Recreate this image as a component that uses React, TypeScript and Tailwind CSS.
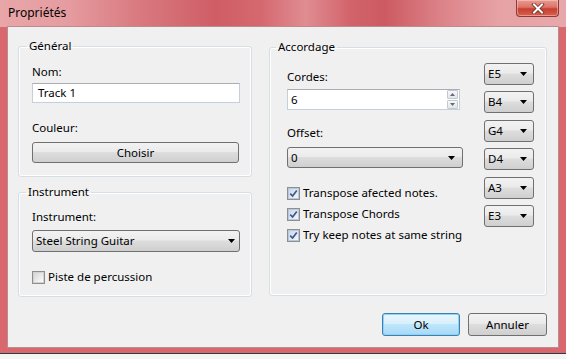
import React from "react";

function Arrow() {
  return (
    <svg width="7" height="4" viewBox="0 0 7 4" className="shrink-0">
      <path d="M0 0 H7 L3.5 4 Z" fill="#000" />
    </svg>
  );
}

function Check({ checked }: { checked: boolean }) {
  return (
    <span className="w-[13px] h-[13px] border border-[#8e8f8f] bg-white flex items-center justify-center shrink-0">
      <span
        className={
          checked
            ? "w-[11px] h-[11px] border border-[#b8c7db] bg-[linear-gradient(135deg,#cad7e9,#f4f7fb)] flex items-center justify-center"
            : "w-[11px] h-[11px] border border-[#d2d2d2] bg-[linear-gradient(135deg,#d6d6d6,#fbfbfb)] flex items-center justify-center"
        }
      >
        {checked && (
          <svg width="9" height="9" viewBox="0 0 9 9">
            <path d="M1.2 4.6 L3.6 7 L7.8 1.6" stroke="#3f568a" strokeWidth="1.7" fill="none" />
          </svg>
        )}
      </span>
    </span>
  );
}

function NoteCombo({ text }: { text: string }) {
  return (
    <div className="h-[22px] flex items-center justify-between border border-[#707070] rounded-[3px] bg-[linear-gradient(to_bottom,#f2f2f2_0%,#ebebeb_45%,#dddddd_50%,#cfcfcf_100%)] pl-[3px] pr-[6px]">
      <span className="leading-[16px]">{text}</span>
      <Arrow />
    </div>
  );
}

export default function App() {
  return (
    <div className="w-[566px] h-[359px] bg-[#d9686e] flex flex-col text-[11.5px] text-black font-['Noto_Sans',sans-serif] overflow-hidden">
      {/* title bar */}
      <div className="h-[27px] flex items-start justify-between bg-[linear-gradient(90deg,#e8a6a9_0%,#e59ca0_12%,#d97b81_24%,#cf5d66_38%,#d5686f_46%,#df8d92_54%,#d2636a_62%,#cd5a62_68%,#dc8389_78%,#e6a2a5_88%,#e8a8ab_100%)]">
        <span className="ml-[8px] mt-[5px] leading-[16px] text-[12px]">Propriétés</span>
        <div className="mr-[7px] w-[43px] h-[17px] rounded-b-[4px] border border-t-0 border-[#8a3b36] bg-[linear-gradient(to_bottom,#e89a90_0%,#dc7467_45%,#c83f30_55%,#d9604f_100%)] flex items-center justify-center shadow-[inset_0_0_0_1px_rgba(255,220,215,0.45)]">
          <svg width="14" height="11" viewBox="0 0 14 11">
            <path d="M3 1.5 L11 9.5 M11 1.5 L3 9.5" stroke="#6b2b27" strokeWidth="3.6" strokeLinecap="square" />
            <path d="M3 1.5 L11 9.5 M11 1.5 L3 9.5" stroke="#ffffff" strokeWidth="2" strokeLinecap="square" />
          </svg>
        </div>
      </div>

      {/* client area */}
      <div className="mx-[8px] h-[320px] bg-[#f0f0f0] flex flex-col pt-[11px] pl-[10px] pr-[11px] shadow-[0_0_0_1px_#b98c8f]">
        <div className="flex gap-[17px] items-start">
          {/* left column */}
          <div className="w-[234px] flex flex-col">
            <fieldset className="h-[139px] border border-[#d5dfe5] rounded-[3px] px-0 pb-0 m-0 shadow-[inset_0_0_0_1px_#ffffff]">
              <legend className="ml-[8px] px-[2px] leading-[16px]">Général</legend>
              <div className="pl-[13px] flex flex-col">
                <span className="mt-[10px] leading-[16px]">Nom:</span>
                <div className="mt-[3px] w-[208px] h-[20px] border border-[#c5cfd9] border-t-[#abadb3] bg-white flex items-center pl-[5px]">
                  <span className="leading-[16px]">Track 1</span>
                </div>
                <span className="mt-[17px] leading-[16px]">Couleur:</span>
                <div className="mt-[6px] w-[207px] h-[21px] border border-[#707070] rounded-[3px] bg-[linear-gradient(to_bottom,#f2f2f2_0%,#ebebeb_45%,#dddddd_50%,#cfcfcf_100%)] flex items-center justify-center">
                  <span className="leading-[16px]">Choisir</span>
                </div>
              </div>
            </fieldset>

            <fieldset className="mt-[7px] h-[113px] border border-[#d5dfe5] rounded-[3px] px-0 pb-0 m-0 shadow-[inset_0_0_0_1px_#ffffff]">
              <legend className="ml-[7px] px-[2px] leading-[16px]">Instrument</legend>
              <div className="pl-[13px] flex flex-col">
                <span className="mt-[9px] leading-[16px]">Instrument:</span>
                <div className="mt-[5px] w-[208px] h-[22px] flex items-center justify-between border border-[#707070] rounded-[3px] bg-[linear-gradient(to_bottom,#f2f2f2_0%,#ebebeb_45%,#dddddd_50%,#cfcfcf_100%)] pl-[3px] pr-[4px]">
                  <span className="leading-[16px]">Steel String Guitar</span>
                  <Arrow />
                </div>
                <div className="mt-[17px] h-[16px] flex items-center gap-[3px]">
                  <Check checked={false} />
                  <span className="leading-[16px]">Piste de percussion</span>
                </div>
              </div>
            </fieldset>
          </div>

          {/* right group */}
          <fieldset className="mt-[1px] w-[278px] h-[257px] border border-[#d5dfe5] rounded-[3px] px-0 pb-0 m-0 shadow-[inset_0_0_0_1px_#ffffff]">
            <legend className="ml-[6px] px-[2px] leading-[16px]">Accordage</legend>
            <div className="flex pl-[17px]">
              <div className="w-[176px] flex flex-col">
                <span className="mt-[14px] leading-[16px]">Cordes:</span>
                <div className="mt-[4px] w-[173px] h-[21px] border border-[#c5cfd9] border-t-[#abadb3] bg-white flex items-center justify-between pl-[3px] pr-[1px]">
                  <span className="leading-[16px]">6</span>
                  <div className="w-[11px] h-[19px] flex flex-col gap-[1px]">
                    <div className="h-[9px] border border-[#c3c9d0] rounded-[1px] bg-[linear-gradient(to_bottom,#f7f7f7,#e4e6e9)] flex items-center justify-center">
                      <svg width="5" height="3" viewBox="0 0 5 3"><path d="M0 3 H5 L2.5 0 Z" fill="#5d6b80" /></svg>
                    </div>
                    <div className="h-[9px] border border-[#c3c9d0] rounded-[1px] bg-[linear-gradient(to_bottom,#f7f7f7,#e4e6e9)] flex items-center justify-center">
                      <svg width="5" height="3" viewBox="0 0 5 3"><path d="M0 0 H5 L2.5 3 Z" fill="#5d6b80" /></svg>
                    </div>
                  </div>
                </div>
                <span className="mt-[15px] leading-[16px]">Offset:</span>
                <div className="mt-[6px] w-[176px] h-[21px] flex items-center justify-between border border-[#707070] rounded-[3px] bg-[linear-gradient(to_bottom,#f2f2f2_0%,#ebebeb_45%,#dddddd_50%,#cfcfcf_100%)] pl-[3px] pr-[7px]">
                  <span className="leading-[16px]">0</span>
                  <Arrow />
                </div>
                <div className="mt-[17px] flex flex-col gap-[5px]">
                  <div className="h-[16px] flex items-center gap-[3px]">
                    <Check checked={true} />
                    <span className="leading-[16px] whitespace-nowrap">Transpose afected notes.</span>
                  </div>
                  <div className="h-[16px] flex items-center gap-[3px]">
                    <Check checked={true} />
                    <span className="leading-[16px] whitespace-nowrap">Transpose Chords</span>
                  </div>
                  <div className="h-[16px] flex items-center gap-[3px]">
                    <Check checked={true} />
                    <span className="leading-[16px] whitespace-nowrap">Try keep notes at same string</span>
                  </div>
                </div>
              </div>
              <div className="ml-[21px] mt-[8px] w-[50px] flex flex-col gap-[6.4px]">
                <NoteCombo text="E5" />
                <NoteCombo text="B4" />
                <NoteCombo text="G4" />
                <NoteCombo text="D4" />
                <NoteCombo text="A3" />
                <NoteCombo text="E3" />
              </div>
            </div>
          </fieldset>
        </div>

        <div className="mt-[16px] flex justify-end gap-[8px]">
          <div className="w-[78px] h-[23px] rounded-[3px] border border-[#3c7fb1] bg-[linear-gradient(to_bottom,#eaf6fd_0%,#d9f0fc_45%,#bee6fd_50%,#a7d9f5_100%)] shadow-[inset_0_0_0_1px_#8fd2f5] flex items-center justify-center">
            <span className="leading-[16px]">Ok</span>
          </div>
          <div className="w-[79px] h-[23px] rounded-[3px] border border-[#707070] bg-[linear-gradient(to_bottom,#f2f2f2_0%,#ebebeb_45%,#dddddd_50%,#cfcfcf_100%)] flex items-center justify-center">
            <span className="leading-[16px]">Annuler</span>
          </div>
        </div>
      </div>

      {/* bottom frame */}
      <div className="h-[6px] shrink-0" />
      <div className="h-[1px] bg-[#2c3d44] shrink-0" />
      <div className="flex-1 bg-[#f4f6f6]" />
    </div>
  );
}
